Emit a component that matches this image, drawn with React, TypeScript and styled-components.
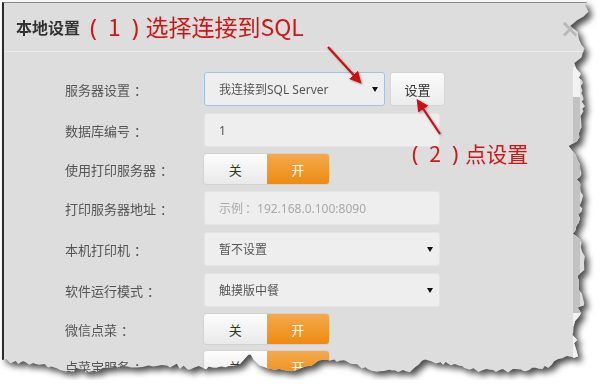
import React from "react";
import styled, { createGlobalStyle } from "styled-components";

const GlobalStyle = createGlobalStyle`
  html, body {
    margin: 0;
    padding: 0;
    background: #ffffff;
  }

  body {
    font-family: "Noto Sans", "Noto Sans CJK SC", sans-serif;
  }
`;

// torn paper edge: rough outline through a few control points, plus noise
const makeRand = (seed: number) => () => {
  seed = (seed * 16807) % 2147483647;
  return (seed - 1) / 2147483646;
};

const lerpAt = (ctrl: number[][], t: number) => {
  for (let i = 1; i < ctrl.length; i++) {
    if (t <= ctrl[i][0]) {
      const [a, va] = ctrl[i - 1];
      const [b, vb] = ctrl[i];
      return va + ((vb - va) * (t - a)) / (b - a || 1);
    }
  }
  return ctrl[ctrl.length - 1][1];
};

const tornClip = (() => {
  const rand = makeRand(29);
  // panel-local coordinates (panel sits at page 2,2)
  const right = [
    [0, 585], [14, 586], [20, 573], [34, 578], [52, 582], [60, 573],
    [74, 578], [98, 582], [128, 578], [148, 571], [168, 578], [198, 581],
    [228, 574], [258, 583], [288, 576], [298, 583], [328, 571], [350, 576],
  ];
  const bottom = [
    [0, 358], [10, 360], [40, 362], [60, 368], [90, 370], [110, 365],
    [150, 363], [200, 367], [236, 364], [248, 352], [258, 364], [285, 368],
    [305, 366], [325, 356], [340, 360], [370, 368], [405, 370], [420, 360],
    [455, 362], [470, 368], [520, 369], [545, 365], [560, 356], [576, 354],
  ];
  const pts: string[] = ["0px 0px", "585px 0px"];
  for (let y = 3; y < 350; y += 2 + rand() * 4) {
    const spike = rand() < 0.12 ? -5 * rand() : 0;
    const x = lerpAt(right, y) + (rand() - 0.5) * 4 + spike;
    pts.push(`${x.toFixed(1)}px ${y.toFixed(1)}px`);
  }
  for (let x = 576; x > 0; x -= 2 + rand() * 4) {
    const spike = rand() < 0.1 ? -4 * rand() : 0;
    const y = lerpAt(bottom, x) + (rand() - 0.5) * 4 + spike;
    pts.push(`${x.toFixed(1)}px ${y.toFixed(1)}px`);
  }
  pts.push("0px 358px");
  return `polygon(${pts.join(", ")})`;
})();

type Row =
  | { kind: "input"; label: string; value: string; placeholder?: boolean }
  | { kind: "select"; label: string; value: string }
  | { kind: "toggle"; label: string };

const rows: Row[] = [
  { kind: "input", label: "数据库编号", value: "1" },
  { kind: "toggle", label: "使用打印服务器" },
  {
    kind: "input",
    label: "打印服务器地址",
    value: "示例：192.168.0.100:8090",
    placeholder: true,
  },
  { kind: "select", label: "本机打印机", value: "暂不设置" },
  { kind: "select", label: "软件运行模式", value: "触摸版中餐" },
  { kind: "toggle", label: "微信点菜" },
  { kind: "toggle", label: "点菜宝服务" },
];

// the fullwidth colon sits centred in the original font, so give it room
const withColons = (text: string) =>
  text.split("：").map((part, i) => (
    <React.Fragment key={i}>
      {i > 0 && <StyledColon $tight>：</StyledColon>}
      {part}
    </React.Fragment>
  ));

const Toggle = () => (
  <StyledToggle>
    <StyledToggleHalf>关</StyledToggleHalf>
    <StyledToggleHalf $on>开</StyledToggleHalf>
  </StyledToggle>
);

const Label = ({ text }: { text: string }) => (
  <StyledLabel>
    {text}
    <StyledColon>：</StyledColon>
  </StyledLabel>
);

const App = () => {
  return (
    <>
      <GlobalStyle />
      <StyledSheet>
        <StyledPanel>
          <StyledHeader>
            <StyledTitle>本地设置</StyledTitle>
            <StyledNote>
              <StyledParen $side="open">(</StyledParen>1
              <StyledParen $side="close">)</StyledParen>选择连接到SQL
            </StyledNote>
            <StyledClose>×</StyledClose>
          </StyledHeader>

          <StyledBody>
            <StyledForm>
              <Label text="服务器设置" />
              <StyledControlGroup>
                <StyledField $width={181} $focused>
                  <span>我连接到SQL Server</span>
                  <StyledCaret />
                </StyledField>
                <StyledButton>设置</StyledButton>
              </StyledControlGroup>

              {rows.map((row) => (
                <React.Fragment key={row.label}>
                  <Label text={row.label} />
                  {row.kind === "toggle" ? (
                    <Toggle />
                  ) : (
                    <StyledField
                      $width={236}
                      $muted={row.kind === "input" && !!row.placeholder}
                    >
                      <span>{withColons(row.value)}</span>
                      {row.kind === "select" && <StyledCaret />}
                    </StyledField>
                  )}
                </React.Fragment>
              ))}
            </StyledForm>

            <StyledScrollTrack>
              <StyledScrollThumb />
            </StyledScrollTrack>
          </StyledBody>

          <StyledNoteSecond>
            <StyledParen $side="open">(</StyledParen>2
            <StyledParen $side="close">)</StyledParen>点设置
          </StyledNoteSecond>

          <StyledArrows viewBox="0 0 588 378" width="588" height="378">
            <defs>
              <marker
                id="head"
                viewBox="0 0 10 10"
                refX="8"
                refY="5"
                markerWidth="5.5"
                markerHeight="5.5"
                orient="auto"
              >
                <path d="M0 0 L10 5 L0 10 z" fill="#cc1010" />
              </marker>
            </defs>
            <line
              x1="324"
              y1="44"
              x2="356"
              y2="79"
              stroke="#cc1010"
              strokeWidth="2.2"
              markerEnd="url(#head)"
            />
            <line
              x1="436"
              y1="131"
              x2="414"
              y2="98"
              stroke="#cc1010"
              strokeWidth="2.2"
              markerEnd="url(#head)"
            />
          </StyledArrows>
        </StyledPanel>
      </StyledSheet>
    </>
  );
};

const StyledSheet = styled.div`
  margin: 2px 0 0 2px;
  width: 588px;
  height: 378px;
  filter: drop-shadow(4px 4px 3px rgba(0, 0, 0, 0.7));
`;

const StyledPanel = styled.div`
  position: relative;
  box-sizing: border-box;
  width: 588px;
  height: 378px;
  background: #dcdddc;
  border-top: 1px solid #8c8c8c;
  border-left: 2px solid #2b2b2b;
  clip-path: ${tornClip};
  display: flex;
  flex-direction: column;
  overflow: hidden;
`;

const StyledHeader = styled.div`
  display: flex;
  align-items: center;
  height: 48px;
  padding-left: 12px;
  border-bottom: 1px solid #e9e9e9;
  flex-shrink: 0;
`;

const StyledTitle = styled.div`
  font-size: 16px;
  font-weight: 700;
  color: #333333;
`;

const StyledNote = styled.div`
  margin-left: 10px;
  font-family: "Noto Sans CJK SC", sans-serif;
  font-size: 23px;
  color: #d01515;
  line-height: 1;
`;

const StyledParen = styled.span<{ $side: "open" | "close" }>`
  font-family: "Noto Sans", sans-serif;
  margin: ${(p) => (p.$side === "open" ? "0 11px 0 0" : "0 7px 0 11px")};
`;

const StyledColon = styled.span<{ $tight?: boolean }>`
  margin: ${(p) => (p.$tight ? "0 0 0 2px" : "0 0 0 4px")};
`;

const StyledClose = styled.div`
  margin-left: auto;
  margin-right: 10px;
  margin-top: 4px;
  font-family: "DejaVu Sans", sans-serif;
  font-size: 24px;
  font-weight: 700;
  color: #b9b9b9;
  line-height: 1;
`;

const StyledBody = styled.div`
  flex: 1;
  display: flex;
  padding-top: 15px;
  min-height: 0;
`;

const StyledForm = styled.div`
  flex: 1;
  display: grid;
  grid-template-columns: 139px auto;
  grid-auto-rows: min-content;
  row-gap: 7px;
  align-items: center;
  justify-items: start;
  padding: 5px 0 0 61px;
`;

const StyledLabel = styled.div`
  font-size: 13px;
  color: #555555;
`;

const StyledControlGroup = styled.div`
  display: flex;
  gap: 5px;
`;

const StyledField = styled.div<{
  $width: number;
  $focused?: boolean;
  $muted?: boolean;
}>`
  box-sizing: border-box;
  width: ${(p) => p.$width}px;
  height: 34px;
  display: flex;
  align-items: center;
  justify-content: space-between;
  padding: 0 6px 0 14px;
  background: #eeeeee;
  border: 1px solid ${(p) => (p.$focused ? "#9fc4e6" : "#e4e4e4")};
  border-radius: 3px;
  font-size: 12px;
  color: ${(p) => (p.$muted ? "#a9a9a9" : "#555555")};
`;

const StyledCaret = styled.i`
  width: 0;
  height: 0;
  border-left: 3px solid transparent;
  border-right: 3px solid transparent;
  border-top: 5px solid #111111;
`;

const StyledButton = styled.div`
  box-sizing: border-box;
  width: 55px;
  height: 34px;
  display: flex;
  align-items: center;
  justify-content: center;
  background: linear-gradient(#fbfbfb, #ececec);
  border: 1px solid #d6d6d6;
  border-radius: 3px;
  font-size: 13px;
  color: #333333;
`;

const StyledToggle = styled.div`
  display: flex;
  width: 125px;
  height: 30px;
  border-radius: 3px;
  overflow: hidden;
  box-shadow: 0 0 0 1px #d2d2d2;
`;

const StyledToggleHalf = styled.div<{ $on?: boolean }>`
  flex: 1;
  display: flex;
  align-items: center;
  justify-content: center;
  font-size: 13px;
  color: ${(p) => (p.$on ? "#ffffff" : "#333333")};
  background: ${(p) =>
    p.$on
      ? "linear-gradient(#f4aa4c, #ee8a12)"
      : "linear-gradient(#fdfdfd, #e9e9e9)"};
`;

const StyledScrollTrack = styled.div`
  width: 7px;
  margin-right: 10px;
  background: #f2f2f2;
  display: flex;
  flex-direction: column;
`;

const StyledScrollThumb = styled.div`
  margin-top: 30px;
  height: 216px;
  background: #c2c2c2;
`;

const StyledNoteSecond = styled.div`
  position: absolute;
  left: 408px;
  top: 138px;
  font-family: "Noto Sans CJK SC", sans-serif;
  font-size: 21px;
  line-height: 24px;
  color: #d01515;
`;

const StyledArrows = styled.svg`
  position: absolute;
  left: 0;
  top: 0;
  pointer-events: none;
  filter: drop-shadow(1px 1px 1px rgba(0, 0, 0, 0.3));
`;

export default App;
